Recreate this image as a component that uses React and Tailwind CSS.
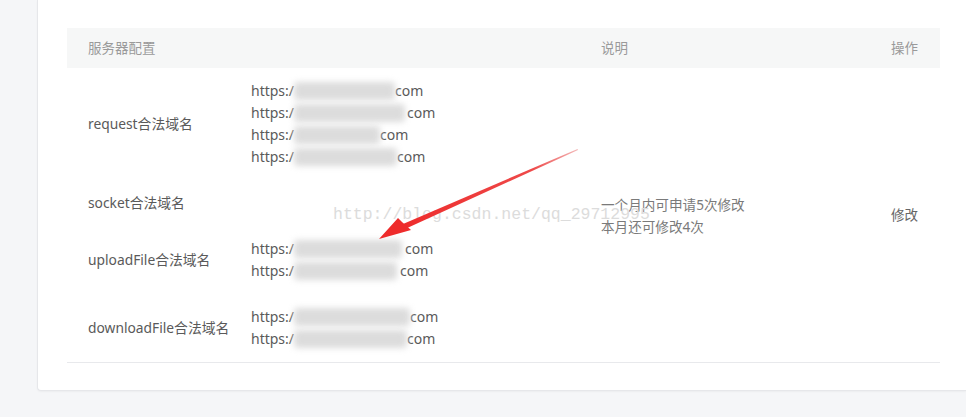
import React from 'react';

const font = { fontFamily: '"Noto Sans", "Noto Sans CJK SC", sans-serif' };

const rows = [
  { label: 'request合法域名', urls: [[101, 0], [111, 2], [86, 0], [103, 0]] },
  { label: 'socket合法域名', urls: [] },
  { label: 'uploadFile合法域名', urls: [[108, 3], [103, 3]] },
  { label: 'downloadFile合法域名', urls: [[116, 0], [113, 0]] },
];

const Url = ({ w, gap }) => (
  <div className="h-[22px] leading-[22px] whitespace-nowrap flex items-center">
    <span>https:/</span>
    <span className="inline-block h-[18px] bg-[#dcdcdc] blur-[3px] rounded" style={{ width: w }} />
    <span style={{ marginLeft: gap }}>com</span>
  </div>
);

const App = () => {
  return (
    <div className="relative w-full h-[417px] bg-[#f5f6f8] overflow-hidden text-[#5a5a5a]" style={font}>
      <div className="ml-[37px] h-[391px] bg-white border-l border-b border-[#e6e7ea] rounded-bl shadow-[0_1px_2px_rgba(0,0,0,0.04)] pt-[28px] pl-[29px] pr-[26px]">
        <div className="flex h-[40px] items-center bg-[#f6f7f7] text-[13.5px] text-[#9a9a9a]">
          <div className="w-[534px] pl-[21px]">服务器配置</div>
          <div className="flex-1">说明</div>
          <div className="pr-[22px]">操作</div>
        </div>
        <div className="flex border-b border-[#e8e9ec]">
          <div className="w-[534px]">
            {rows.map((r) => (
              <div key={r.label} className="flex items-center py-[12px] min-h-[46px]">
                <div className="w-[184px] pl-[21px] text-[13.8px]">{r.label}</div>
                <div className="text-[14px]">
                  {r.urls.map(([w, g], i) => (
                    <Url key={i} w={w} gap={g} />
                  ))}
                </div>
              </div>
            ))}
          </div>
          <div className="flex-1 flex flex-col justify-center text-[13.6px] text-[#7a7a7a] leading-[22px] pt-[1px]">
            <div>一个月内可申请5次修改</div>
            <div>本月还可修改4次</div>
          </div>
          <div className="flex items-center pr-[22px] text-[13.5px] text-[#666]">修改</div>
        </div>
      </div>

      <div
        className="absolute left-[333px] top-[203px] text-[16.5px] text-[#dcdcdc] whitespace-nowrap pointer-events-none"
        style={{ fontFamily: '"Liberation Mono", monospace' }}
      >
        http://blog.csdn.net/qq_29712995
      </div>

      <svg className="absolute left-0 top-0 pointer-events-none" width="966" height="417">
        <defs>
          <linearGradient id="ar" x1="578" y1="150" x2="400" y2="230" gradientUnits="userSpaceOnUse">
            <stop offset="0" stopColor="#f3b7b7" />
            <stop offset="0.25" stopColor="#ee4a4a" />
            <stop offset="1" stopColor="#ee2b2b" />
          </linearGradient>
        </defs>
        <polygon points="578,150 577.5,149 403,224 405,229" fill="url(#ar)" />
        <polygon points="379,239 398,218 402,222 411,230" fill="#ee2b2b" />
      </svg>
    </div>
  );
};

export default App;
